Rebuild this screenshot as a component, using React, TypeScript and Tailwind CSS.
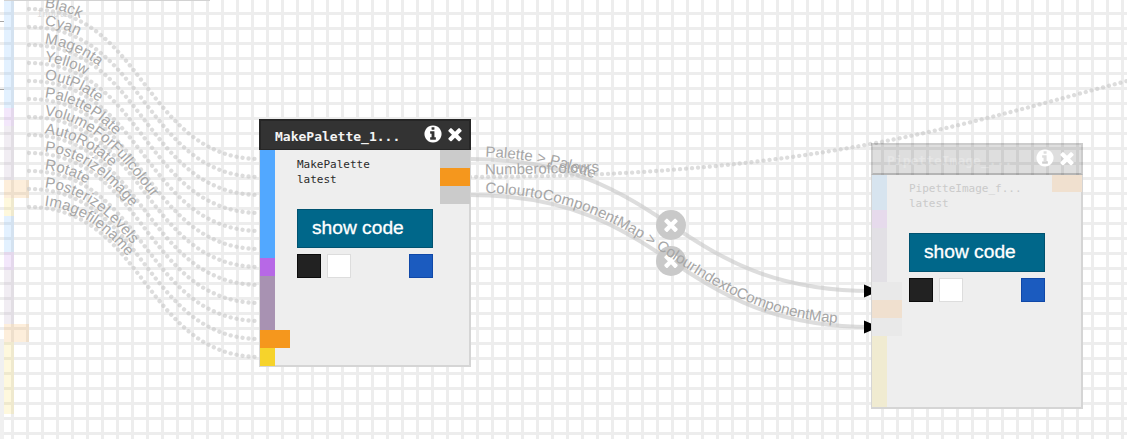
import React from "react";

const TIMES =
  "M1490 1322q0 40-28 68l-136 136q-28 28-68 28t-68-28l-294-294-294 294q-28 28-68 28t-68-28l-136-136q-28-28-28-68t28-68l294-294-294-294q-28-28-28-68t28-68l136-136q28-28 68-28t68 28l294 294 294-294q28-28 68-28t68 28l136 136q28 28 28 68t-28 68l-294 294 294 294q28 28 28 68z";
const INFO =
  "M1152 1376v-160q0-14-9-23t-23-9h-96v-512q0-14-9-23t-23-9h-320q-14 0-23 9t-9 23v160q0 14 9 23t23 9h96v320h-96q-14 0-23 9t-9 23v160q0 14 9 23t23 9h448q14 0 23-9t9-23zm-128-896v-160q0-14-9-23t-23-9h-192q-14 0-23 9t-9 23v160q0 14 9 23t23 9h192q14 0 23-9t9-23zm640 416q0 209-103 385.5t-279.5 279.5-385.5 103-385.5-103-279.5-279.5-103-385.5 103-385.5 279.5-279.5 385.5-103 385.5 103 279.5 279.5 103 385.5z";

type Point = [number, number];

function curve([x1, y1]: Point, [x2, y2]: Point) {
  const mid = (x1 + x2) / 2;
  return `M${x1} ${y1} C${mid} ${y1} ${mid} ${y2} ${x2} ${y2}`;
}

const INPUTS = [
  "Black", "Cyan", "Magenta", "Yellow", "OutPlate", "PalettePlate",
  "VolumeForFullcolour", "AutoRotate", "PosterizeImage", "Rotate",
  "PosterizeLevels", "Imagefilename",
];

interface Link { id: string; label: string; d: string; dotted: boolean }

const LINKS: Link[] = [
  ...INPUTS.map((label, i) => ({
    id: `in${i}`,
    label,
    d: curve([29, 9 + 18 * i], [260, 159 + 18 * i]),
    dotted: true,
  })),
  { id: "palette", label: "Palette > Palette", d: curve([470, 159], [872, 291]), dotted: false },
  { id: "count", label: "Numberofcolours", d: curve([470, 177], [1670, 15.4]), dotted: true },
  { id: "map", label: "ColourtoComponentMap > ColourIndextoComponentMap", d: curve([470, 195], [872, 327]), dotted: false },
];

function Icon({ path, className }: { path: string; className: string }) {
  return (
    <svg viewBox="0 0 1792 1792" className={className} fill="currentColor">
      <path d={path} />
    </svg>
  );
}

function Links() {
  return (
    <svg className="absolute inset-0" width="1127" height="439">
      {LINKS.map((l) => (
        <path
          key={l.id}
          id={l.id}
          d={l.d}
          fill="none"
          stroke="#c8c8c8"
          strokeOpacity="0.62"
          strokeWidth={l.dotted ? 4.3 : 4}
          strokeLinecap={l.dotted ? "round" : "butt"}
          strokeDasharray={l.dotted ? "0.01 5.99" : undefined}
        />
      ))}
      {[291, 327].map((y) => (
        <path key={y} d={`M864 ${y - 6.5}L878 ${y - 0.5}V${y + 0.5}L864 ${y + 6.5}Z`} fill="#000" />
      ))}
      {[225, 261].map((y) => (
        <g key={y}>
          <circle cx="671" cy={y} r="15" fill="#c9c9c9" />
          <path d={TIMES} fill="#fff" transform={`translate(660.9 ${y - 10.5}) scale(0.01125)`} />
        </g>
      ))}
      {LINKS.map((l) => (
        <text key={l.id} dy="-2.5" fontSize="15" fill="#a6a6a6" className="font-['Liberation_Sans',sans-serif]">
          <textPath href={`#${l.id}`} startOffset="15">{l.label}</textPath>
        </text>
      ))}
    </svg>
  );
}

function NodeBody({ name }: { name: string }) {
  return (
    <>
      <div className="h-[30px] font-['DejaVu_Sans_Mono',monospace] text-[11px] leading-[15px]">
        <div>{name}</div>
        <div>latest</div>
      </div>
      <div className="mt-[22px] flex h-[39px] w-[136px] items-center border border-[#005270] bg-[#00678a] pb-[2px] pl-[14px] font-['Liberation_Sans',sans-serif] text-[19.2px] leading-[22px] text-white [-webkit-text-stroke:0.3px_white]">
        <span className="whitespace-nowrap">show code</span>
      </div>
      <div className="mt-[6px] flex w-[136px]">
        <div className="size-[24px] border border-[#0c0c0c] bg-[#222222]" />
        <div className="ml-[6px] size-[24px] border border-[#dddddd] bg-white" />
        <div className="ml-auto size-[24px] border border-[#1048a8] bg-[#1b5bbf]" />
      </div>
    </>
  );
}

function HeaderIcons() {
  return (
    <div className="mb-[2px] mr-[4px] flex gap-[2px] text-white">
      <Icon path={INFO} className="size-[20px]" />
      <Icon path={TIMES} className="size-[20px]" />
    </div>
  );
}

function MakePaletteNode() {
  return (
    <section className="absolute left-[259px] top-[119px] flex h-[248px] w-[212px] flex-col">
      <header className="flex h-[32px] shrink-0 items-center border-2 border-[#262626] bg-[#333333] pl-[14px] text-[#f4f4f4]">
        <span className="mt-[3px] grow font-['DejaVu_Sans_Mono',monospace] text-[13px] font-bold">MakePalette_1...</span>
        <HeaderIcons />
      </header>
      <div className="-mt-px flex grow justify-between border-b-2 border-l border-r-2 border-[#d5d5d5] bg-[#eeeeee]">
        <div className="-mb-px flex w-[30px] flex-col">
          <div className="h-[108px] w-[15px] bg-[#52a8ff]" />
          <div className="h-[18px] w-[15px] bg-[#b768e6]" />
          <div className="h-[54px] w-[15px] bg-[#a892b2]" />
          <div className="h-[18px] w-[30px] bg-[#f5971d]" />
          <div className="h-[18px] w-[15px] bg-[#f6d32b]" />
        </div>
        <div className="ml-[7px] mr-auto pt-[7px] text-[#2a2a2a]">
          <NodeBody name="MakePalette" />
        </div>
        <div className="-mr-px flex w-[30px] flex-col">
          <div className="h-[18px] bg-[#cbcbcb]" />
          <div className="h-[18px] bg-[#f5971d]" />
          <div className="h-[18px] bg-[#cbcbcb]" />
        </div>
      </div>
    </section>
  );
}

function PipetteNode() {
  return (
    <section className="absolute left-[871px] top-[143px] flex h-[266px] w-[212px] flex-col">
      <header className="flex h-[32px] shrink-0 items-center border-2 border-[#000000]/8 border-b-[#000000]/18 bg-[#333333]/16 pl-[14px]">
        <span className="mt-[3px] grow font-['DejaVu_Sans_Mono',monospace] text-[13px] font-bold text-white/25">PipetteImage_...</span>
        <HeaderIcons />
      </header>
      <div className="flex grow justify-between border-b-2 border-l border-r-2 border-[#d5d5d5] bg-[#eeeeee]">
        <div className="flex w-[30px] flex-col">
          <div className="h-[35px] w-[15px] bg-[#d7e4ef]" />
          <div className="h-[18px] w-[15px] bg-[#e6daec]" />
          <div className="h-[54px] w-[15px] bg-[#e2e0e5]" />
          <div className="h-[18px] w-[30px] bg-[#e9e9e9]" />
          <div className="h-[18px] w-[30px] bg-[#f0e0cf]" />
          <div className="h-[18px] w-[30px] bg-[#e9e9e9]" />
          <div className="h-[71px] w-[15px] bg-[#f0ebd1]" />
        </div>
        <div className="ml-[7px] mr-auto pt-[6px] text-[#cacaca]">
          <NodeBody name="PipetteImage_f..." />
        </div>
        <div className="-ml-[30px] -mr-px h-[17px] w-[30px] bg-[#f0e0cf]" />
      </div>
    </section>
  );
}

function SourcePorts() {
  return (
    <div className="absolute left-0 top-0 w-[210px]">
      <div className="absolute left-[4px] top-0 h-px w-[206px] bg-[#d2d2d2]" />
      <div className="absolute left-[37px] top-[8px] font-['DejaVu_Sans_Mono',monospace] text-[9px] leading-[12px] text-[#dcdcdc]">Inputs</div>
      <div className="flex">
        <div className="flex w-[4px] flex-col">
          <div className="mt-[21px] h-px bg-[#a6a6a6]" />
          <div className="mt-[67px] h-px bg-[#a6a6a6]" />
          <div className="mt-[249px] h-[100px] bg-[#f0f0f0]" />
        </div>
        <div className="flex flex-col">
          <div className="h-[108px] w-[10px] bg-[#52a8ff]/16" />
          <div className="h-[18px] w-[10px] bg-[#b768e6]/16" />
          <div className="h-[54px] w-[10px] bg-[#a892b2]/16" />
          <div className="h-[18px] w-[25px] bg-[#f5971d]/16" />
          <div className="h-[18px] w-[10px] bg-[#f6d32b]/16" />
          <div className="h-[36px] w-[10px] bg-[#52a8ff]/16" />
          <div className="h-[18px] w-[10px] bg-[#b768e6]/16" />
          <div className="h-[54px] w-[10px] bg-[#a892b2]/16" />
          <div className="h-[18px] w-[25px] bg-[#f5971d]/16" />
          <div className="h-[72px] w-[10px] bg-[#f6d32b]/16" />
        </div>
      </div>
    </div>
  );
}

export default function App() {
  return (
    <main className="relative h-[439px] w-[1127px] overflow-hidden bg-white bg-[linear-gradient(to_right,#ededed_3px,transparent_3px),linear-gradient(to_bottom,#ededed_3px,transparent_3px)] bg-[size:15px_15px] bg-[position:11px_12px]">
      <SourcePorts />
      <Links />
      <MakePaletteNode />
      <PipetteNode />
    </main>
  );
}
